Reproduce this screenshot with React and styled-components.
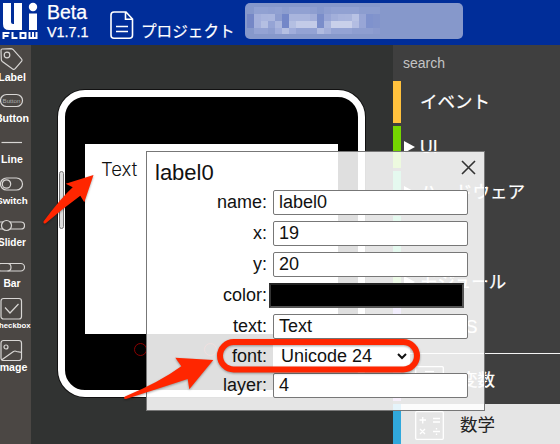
import React from "react";
import styled, { createGlobalStyle } from "styled-components";

const sans = '"Liberation Sans", Arial, sans-serif';
const jp = '"Liberation Sans", "Noto Sans CJK JP", sans-serif';

const GlobalStyle = createGlobalStyle`
  * { box-sizing: border-box; }
  body { margin: 0; font-family: ${sans}; overflow: hidden; }
`;

const Page = styled.div`
  position: relative;
  width: 560px;
  height: 444px;
  overflow: hidden;
  display: flex;
  flex-direction: column;
  background: #313332;
`;

const Header = styled.header`
  height: 45px;
  flex: none;
  display: flex;
  align-items: flex-start;
  background: #002d99;
  color: #fff;
`;

const Logo = styled.svg`
  width: 40px;
  height: 42px;
  flex: none;
`;

const Version = styled.div`
  width: 69px;
  padding: 2px 0 0 7px;
  -webkit-text-stroke: 0.25px #fff;
`;

const Beta = styled.div`
  font-size: 19.5px;
  line-height: 21px;
`;

const VersionNumber = styled.div`
  font-size: 14.4px;
  line-height: 19px;
`;

const DocIcon = styled.svg`
  width: 26px;
  height: 30px;
  margin-top: 10px;
`;

const ProjectLabel = styled.div`
  width: 110px;
  padding: 20px 0 0 6px;
  font: 400 15.6px/24px ${jp};
  -webkit-text-stroke: 0.2px #fff;
  white-space: nowrap;
`;

const ProjectName = styled.div`
  width: 218px;
  height: 36px;
  margin-top: 3px;
  padding: 4px 0 0 2px;
  border-radius: 5px;
  background: #8698cb;
`;

const Mosaic = styled.svg`
  display: block;
  width: 134px;
  height: 27px;
`;

const Body = styled.main`
  flex: 1;
  min-height: 0;
  display: grid;
  grid-template-columns: 31px 362px 1fr;
`;

const Sidebar = styled.nav`
  position: relative;
  overflow: hidden;
  background: #4b4744;
  color: #fff;
`;

const Tool = styled.div`
  width: 38px;
  height: ${(p) => p.$h}px;
  margin-left: -7px;
  display: flex;
  flex-direction: column;
  align-items: center;
`;

const ToolIcon = styled.svg`
  width: 26px;
  height: ${(p) => p.$h}px;
  flex: none;
  fill: none;
  stroke: #d8d6d4;
  stroke-width: 1.2;
`;

const ToolLabel = styled.span`
  font-weight: bold;
  font-size: ${(p) => p.$size || 10.6}px;
  line-height: 12px;
`;

const Canvas = styled.section`
  padding: 45px 0 0 27px;
  background: #313332;
`;

const Device = styled.div`
  position: relative;
  width: 307px;
  height: 307px;
  padding: 47px 0 0 20px;
  border: 7px solid #fff;
  border-radius: 27px;
  background: #000;
  box-shadow: 0 0 0 1px #111;
`;

const Screen = styled.div`
  width: 253px;
  height: 190px;
  padding: 13px 16px;
  background: #fff;
  color: #111;
  font: 300 18.5px/25px Inter, "Noto Sans", sans-serif;
`;

const DeviceButtons = styled.div`
  display: flex;
  gap: 57px;
  padding: 9px 0 0 49px;
`;

const DeviceButton = styled.i`
  width: 13px;
  height: 13px;
  border: 1px solid #8a0000;
  border-radius: 50%;
`;

const SideKey = styled.i`
  position: absolute;
  left: -6px;
  top: 74px;
  width: 5px;
  height: 58px;
  border: 1px solid #777;
  border-radius: 3px;
  background: #ddd;
`;

const Toolbox = styled.aside`
  display: flex;
  flex-direction: column;
  background: #3f3f3f;
  overflow: hidden;
`;

const Search = styled.div`
  height: 36px;
  flex: none;
  padding: 10px 0 0 10px;
  color: #c4c4c4;
  font-size: 14px;
  line-height: 16px;
`;

const Category = styled.div`
  height: 42px;
  flex: none;
  margin-bottom: ${(p) => (p.$last ? 5 : 3)}px;
  display: flex;
  align-items: center;
  border-left: 8px solid ${(p) => p.$color};
  background: ${(p) => (p.$light ? "#e5e5e5" : "transparent")};
  color: ${(p) => (p.$light ? "#222" : "#fff")};
  font: 400 17.5px/24px ${jp};
  -webkit-text-stroke: ${(p) => (p.$light ? 0 : 0.2)}px #fff;
  white-space: nowrap;
`;

const Marker = styled.span`
  width: 19px;
  height: 12px;
  padding-left: 2.5px;
  flex: none;
  display: flex;
`;

const Caret = styled.i`
  border-left: 11px solid #fff;
  border-top: 6px solid transparent;
  border-bottom: 6px solid transparent;
`;

const MathIcon = styled.svg`
  width: 29px;
  height: 29px;
  margin: 0 16px 0 14px;
  flex: none;
  fill: none;
  stroke: #fff;
  stroke-width: 1.3;
`;

const Divider = styled.div`
  height: 1px;
  flex: none;
  margin-bottom: 5px;
  background: #f4f4f4;
`;

const Panel = styled.section`
  position: absolute;
  left: 146px;
  top: 151px;
  width: 339px;
  height: 260px;
  padding: 8px 16px 0 8px;
  border: 1px solid #777;
  background: rgba(255, 255, 255, 0.875);
  color: #111;
`;

const PanelHead = styled.div`
  display: flex;
  justify-content: space-between;
  height: 30px;
  margin-right: -8px;
  font-size: 22px;
  line-height: 25px;
`;

const CloseIcon = styled.svg`
  width: 15px;
  height: 15px;
  stroke: #333;
  stroke-width: 1.6;
`;

const Field = styled.div`
  display: grid;
  grid-template-columns: 112px 195px;
  column-gap: ${(p) => (p.$swatch ? 2 : 6)}px;
  align-items: center;
  height: 25px;
  margin-bottom: ${(p) => p.$gap ?? 6}px;
  font-size: 18px;
  text-align: right;
  white-space: nowrap;
`;

const FieldName = styled.span`
  height: 25px;
  line-height: 25px;
`;

const Input = styled.div`
  height: 25px;
  padding-left: 5px;
  border: 1px solid #777;
  border-radius: 2px;
  background: #fff;
  text-align: left;
  line-height: 22px;
`;

const Swatch = styled.div`
  height: 25px;
  border: 2px solid #555;
  border-top-color: #222;
  border-left-color: #333;
  background: #000;
`;

const Select = styled.div`
  display: flex;
  align-items: center;
  justify-content: space-between;
  width: 137px;
  height: 23px;
  padding: 0 3px 1px 8px;
  background: #fff;
`;

const Chevron = styled.svg`
  width: 10px;
  height: 7px;
  margin-top: 1px;
  fill: none;
  stroke: #111;
  stroke-width: 2;
`;

const Annotations = styled.svg`
  position: absolute;
  inset: 0;
  width: 560px;
  height: 444px;
  pointer-events: none;
  filter: drop-shadow(0 1px 1px rgba(0, 0, 0, 0.35));
`;

const mosaicRows = [
  ["", "91a1d2", "91a1d2", "8f9fd1", "91a1d2", "8c9dcf", "91a1d2", "91a1d2", "91a1d2", "8e9ed0", "8799cd", "8e9ed0", "91a1d2", "91a1d2", "91a1d2", "91a1d2", "8c9dcf", "8c9dcf", "8c9dcf"],
  ["7587c6", "a4b0dc", "a9b5de", "aab6de", "8d9dd0", "7387c8", "a9b5dd", "a9b5dd", "a9b5dd", "a3afda", "7a8dca", "97a5d6", "a2afda", "a8b4dd", "a9b5dd", "b8c2e4", "98a6d6", "7f92cd", "8294cc"],
  ["7587c6", "a4b0dc", "b4bfe2", "95a4d5", "aab6de", "7387c8", "b4bfe2", "c3cbe8", "c3cbe8", "c3cbe8", "7a8dca", "aab6de", "c9d0ea", "c9d0ea", "c9d0ea", "b3bde2", "98a6d6", "7f92cd", "8294cc"],
  ["", "94a3d4", "94a3d4", "8e9ed0", "a0addb", "b4bfe2", "a0addb", "94a3d4", "94a3d4", "94a3d4", "b0bbe0", "a3afda", "94a3d4", "94a3d4", "94a3d4", "8e9ed0", "8e9ed0", "8e9ed0", "8a9ace"],
];

const tools = [
  { name: "Label", h: 41, ih: 26, art: <><path d="M2 5.500q0-1.300 1-1.500l9-.3q1 0 2 .7l8.500 9.500q1 1 .2 2.200l-6.500 7.500q-1.200 1.200-2.600.3L3.300 16.500q-1-.8-1-2z" /><circle cx="8" cy="10" r="2.800" /></> },
  { name: "Button", h: 43, ih: 26, art: <><rect x="1.500" y="8.500" width="22" height="12" rx="6" /><text x="12.500" y="16.800" fontSize="6.200" textAnchor="middle" fill="#aaa" stroke="none">Button</text></> },
  { name: "Line", h: 42, ih: 24, art: <path d="M2.500 13.500h20.500" /> },
  { name: "Switch", size: 9.8, h: 41, ih: 24, art: <><rect x="1.500" y="7" width="22" height="12" rx="6" /><circle cx="7.500" cy="13" r="4.200" /></> },
  { name: "Slider", size: 10, h: 42, ih: 25, art: <><rect x="-2" y="10" width="27.500" height="7" rx="3.500" /><circle cx="7.500" cy="13.500" r="5" fill="#4b4744" /></> },
  { name: "Bar", size: 10.3, h: 40, ih: 24, art: <><rect x="-2" y="9.500" width="27.500" height="7.500" rx="3.750" /><path d="M8.500 9.500q3.500 0 3.500 3.750T8.500 17" /></> },
  { name: "Checkbox", size: 7.8, h: 40, ih: 26, art: <><rect x="2" y="4.500" width="20.500" height="20.500" rx="2.500" /><path d="M6 13.500l5 5.500 8.500-9" /></> },
  { name: "Image", h: 41, ih: 27, art: <><rect x="2" y="6.500" width="20.500" height="20" rx="2.500" /><circle cx="7" cy="13" r="2" /><path d="M2.500 26l12-8.500q1.500-1 3 0l5 .8" /></> },
];

const categories = [
  { name: "イベント", color: "#ffc13d" },
  { name: "UI", color: "#74d600", caret: true },
  { name: "ハードウェア", color: "#35cf83", caret: true },
  { name: "Unit", color: "#35cf83", caret: true },
  { name: "モジュール", color: "#74d640", caret: true },
  { name: "FACES", color: "#9b7cf0", caret: true, last: true },
];

function VariableIcon() {
  return (
    <MathIcon viewBox="0 0 29 29">
      <rect x=".7" y=".7" width="27.600" height="27.600" rx="1" />
      <path d="M10 5.500h9" />
    </MathIcon>
  );
}

function CalcIcon() {
  return (
    <MathIcon viewBox="0 0 29 29">
      <rect x=".7" y=".7" width="27.600" height="27.600" rx="1" />
      <path d="M4.500 9h6.500M7.750 6v6.500M18 7.500h7M18 11h7M5 18l5 5M10 18l-5 5M18 20.500h7M21.500 17v1.500M21.500 22.500V24" />
    </MathIcon>
  );
}

export default function App() {
  return (
    <Page>
      <GlobalStyle />
      <Header>
        <Logo viewBox="0 0 40 42" fill="#fff">
          <path d="M3 3h8v19q0 2 2 2h1V3h8v27H9q-6 0-6-6zM29 13.500h8V30h-8z" />
          <circle cx="33" cy="7" r="4.200" />
          <g fill="none" stroke="#fff" strokeWidth="2">
            <path d="M3.500 39v-6h6M3.500 36h5M12.500 32v6h5M20.500 33h5v5h-5zM29.500 32v6h7v-6M33 32v6" />
          </g>
        </Logo>
        <Version>
          <Beta>Beta</Beta>
          <VersionNumber>V1.7.1</VersionNumber>
        </Version>
        <DocIcon viewBox="0 0 26 30" fill="none" stroke="#fff" strokeWidth="1.600">
          <path d="M5 2h12l6.500 7v16.200q0 3-3 3H5q-3 0-3-3V5q0-3 3-3zM16.500 2v7.200h7M7 16.500h12M7 21.500h12" />
        </DocIcon>
        <ProjectLabel>プロジェクト</ProjectLabel>
        <ProjectName>
          <Mosaic viewBox="0 0 134 27" shapeRendering="crispEdges">
            {mosaicRows.map((row, y) =>
              row.map((c, x) => c && (
                <rect key={`${x}-${y}`} x={x * 7} y={y * 7} width="7" height="7" fill={`#${c}`} />
              ))
            )}
          </Mosaic>
        </ProjectName>
      </Header>
      <Body>
        <Sidebar>
          {tools.map((t) => (
            <Tool key={t.name} $h={t.h}>
              <ToolIcon $h={t.ih} viewBox={`0 0 26 ${t.ih}`}>{t.art}</ToolIcon>
              <ToolLabel $size={t.size}>{t.name}</ToolLabel>
            </Tool>
          ))}
        </Sidebar>
        <Canvas>
          <Device>
            <SideKey />
            <Screen>Text</Screen>
            <DeviceButtons>
              <DeviceButton />
              <DeviceButton />
              <DeviceButton />
            </DeviceButtons>
          </Device>
        </Canvas>
        <Toolbox>
          <Search>search</Search>
          {categories.map((c) => (
            <Category key={c.name} $color={c.color} $last={c.last}>
              <Marker>{c.caret && <Caret />}</Marker>
              {c.name}
            </Category>
          ))}
          <Divider />
          <Category $color="#c080dc"><VariableIcon />変数</Category>
          <Category $color="#30a8dc" $light><CalcIcon />数学</Category>
        </Toolbox>
      </Body>
      <Panel>
        <PanelHead>
          label0
          <CloseIcon viewBox="0 0 15 15"><path d="M1 1l13 13M14 1L1 14" /></CloseIcon>
        </PanelHead>
        <Field><FieldName>name:</FieldName><Input>label0</Input></Field>
        <Field><FieldName>x:</FieldName><Input>19</Input></Field>
        <Field><FieldName>y:</FieldName><Input>20</Input></Field>
        <Field $swatch><FieldName>color:</FieldName><Swatch /></Field>
        <Field $gap={5}><FieldName>text:</FieldName><Input>Text</Input></Field>
        <Field $gap={4}>
          <FieldName>font:</FieldName>
          <Select>Unicode 24<Chevron viewBox="0 0 10 7"><path d="M1 1l4 4 4-4" /></Chevron></Select>
        </Field>
        <Field><FieldName>layer:</FieldName><Input>4</Input></Field>
      </Panel>
      <Annotations viewBox="0 0 560 444" fill="#ff2600">
        <path d="M93.500 175L65.700 183.700L72.700 187.300Q61 198 43.500 221.500Q43 224.500 46 223Q62 209 80.300 195.700L84.300 202.300Z" />
        <path d="M213.300 360L175.300 357.700L181.300 366.300Q160 382 125 396.500Q122.500 399 126 399Q157 389 187.700 379L189.300 389.300Z" />
        <rect x="220" y="342" width="197" height="27.500" rx="13.750" fill="none" stroke="#ff2600" strokeWidth="6" />
      </Annotations>
    </Page>
  );
}
